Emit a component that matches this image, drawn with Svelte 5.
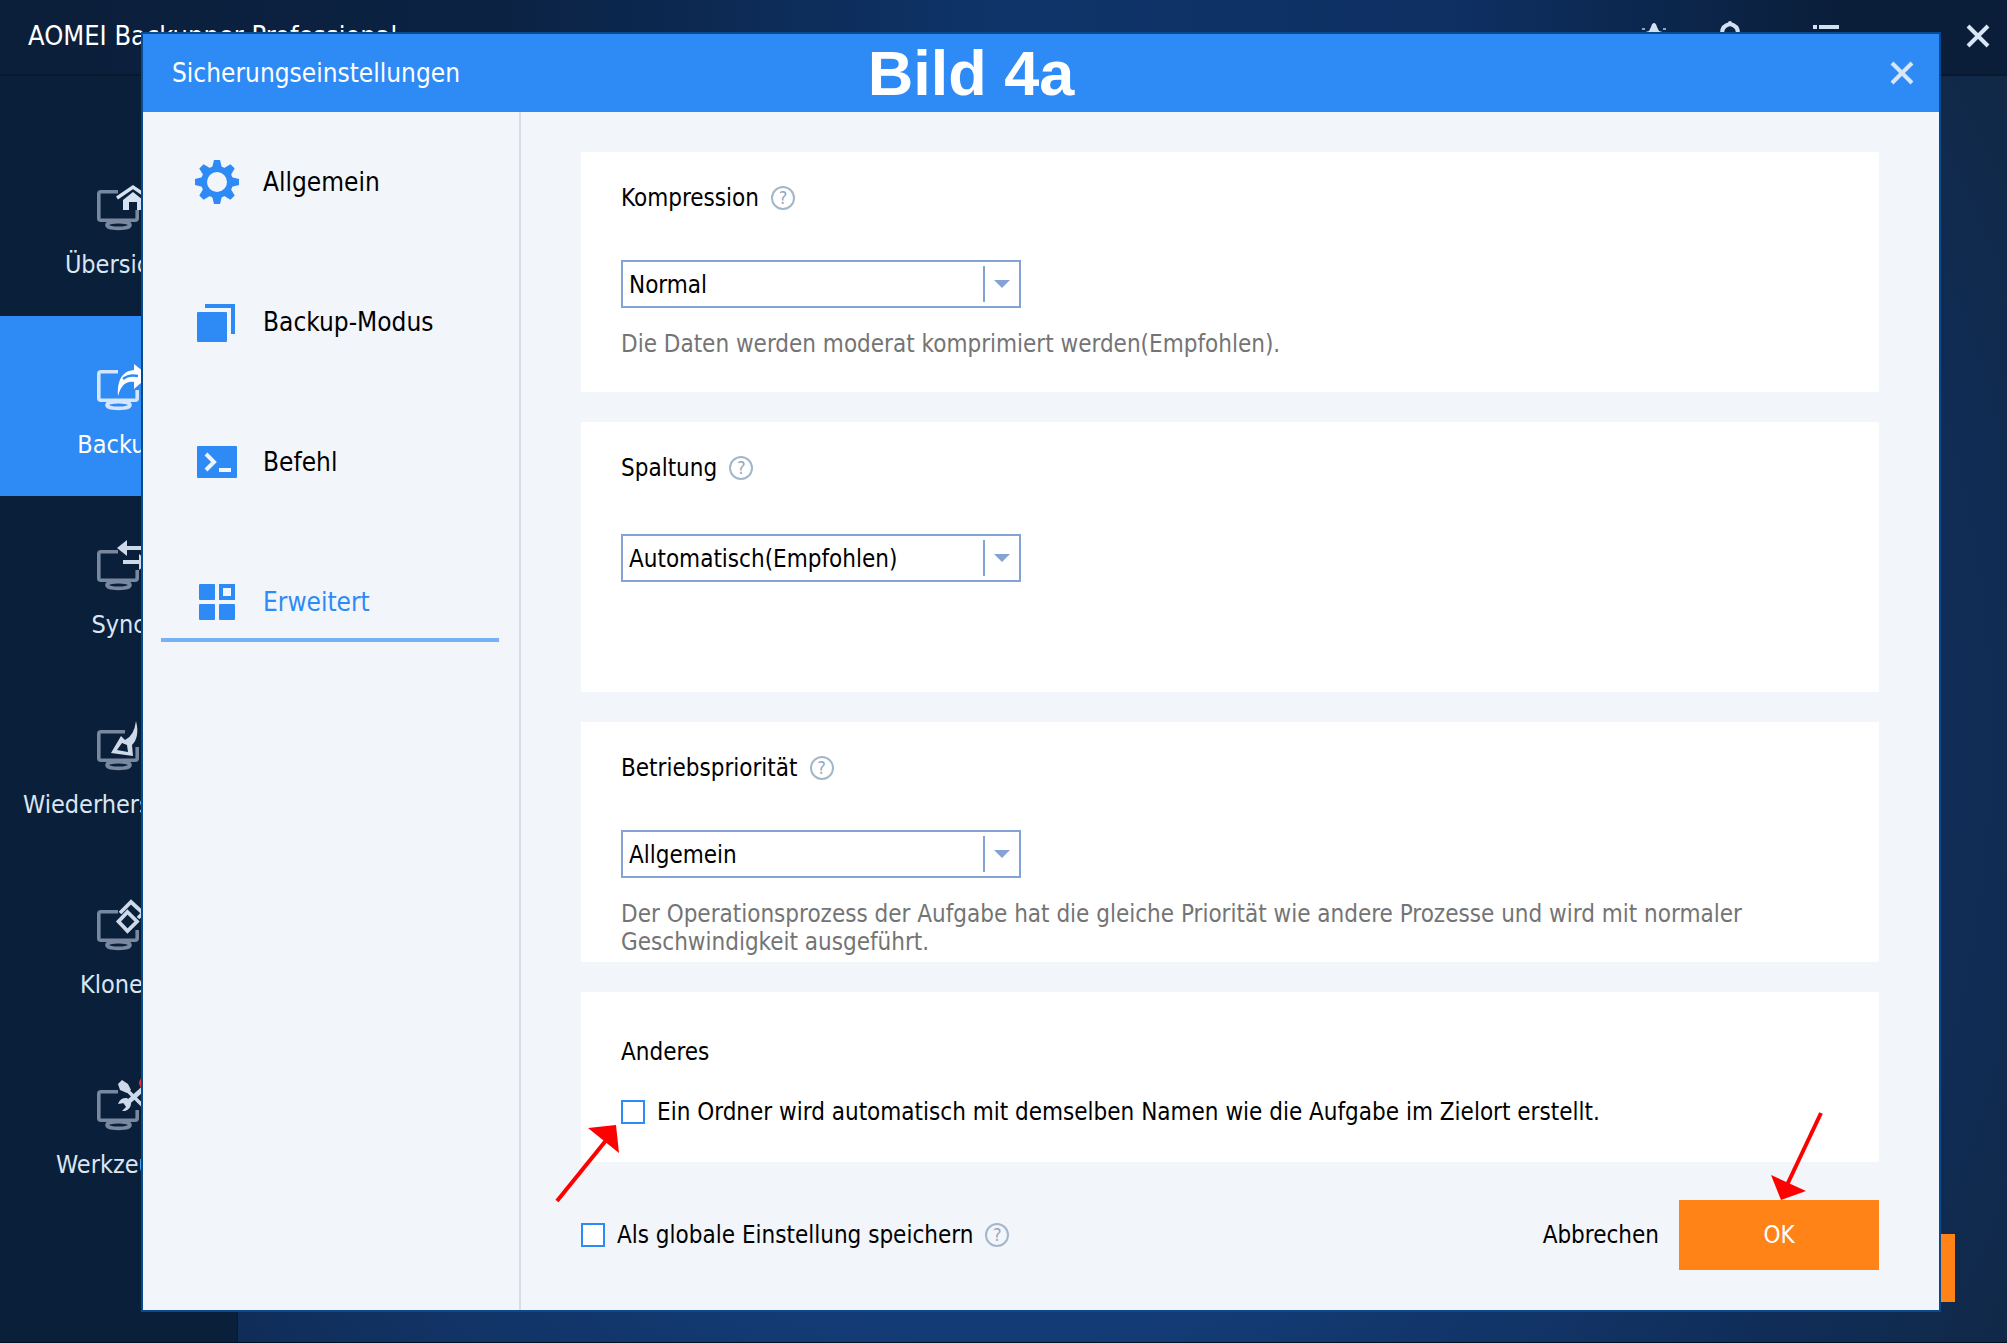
<script>
  const mainNav = [
    { label: 'Übersicht', icon: 'home' },
    { label: 'Backup', icon: 'backup', active: true },
    { label: 'Sync', icon: 'sync' },
    { label: 'Wiederherstellen', icon: 'restore' },
    { label: 'Klonen', icon: 'clone' },
    { label: 'Werkzeuge', icon: 'tools' },
  ];
  const tabs = [
    { label: 'Allgemein', icon: 'gear' },
    { label: 'Backup-Modus', icon: 'layers' },
    { label: 'Befehl', icon: 'terminal' },
    { label: 'Erweitert', icon: 'grid', active: true },
  ];
  let compression = $state('Normal');
  let splitting = $state('Automatisch(Empfohlen)');
  let priority = $state('Allgemein');
  let sameName = $state(false);
  let saveGlobal = $state(false);
</script>

{#snippet closeIcon()}
  <svg width="24" height="24" viewBox="0 0 24 24" aria-hidden="true">
    <path d="M2 2 22 22M22 2 2 22" stroke="#d9e6f5" stroke-width="4" fill="none" />
  </svg>
{/snippet}

{#snippet help(topic)}
  <button class="help" type="button" aria-label={'Hilfe: ' + topic}>?</button>
{/snippet}

<div class="app">
  <header class="titlebar">
    <h1>AOMEI Backupper Professional</h1>
    <div class="tools">
      <button type="button" aria-label="Upgrade">
        <svg width="28" height="28" viewBox="0 0 28 28" aria-hidden="true">
          <path d="M14 1Q16 1 17 5L19 9 26 11 20 17 21 25 14 21 7 25 8 17 2 11 9 9 11 5Q12 1 14 1Z" fill="#d3e0f0" />
          <path d="M2 7h3M23 7h3" stroke="#8fa3bf" stroke-width="2" />
        </svg>
      </button>
      <button type="button" aria-label="Benachrichtigungen">
        <svg width="28" height="28" viewBox="0 0 28 28" aria-hidden="true">
          <path d="M6 22V11C6 6 9 3 14 2c5 1 8 4 8 9v11M2 22h24" stroke="#d3e0f0" stroke-width="4" fill="none" />
          <circle cx="14" cy="1" r="2" fill="#d3e0f0" />
        </svg>
      </button>
      <button class="menu" type="button" aria-label="Menü">
        <svg width="28" height="28" viewBox="0 0 28 28" aria-hidden="true">
          <path d="M1 5h4M7 5h20M1 13h4M7 13h20M1 21h4M7 21h20" stroke="#d3e0f0" stroke-width="4" />
        </svg>
      </button>
      <button class="exit" type="button" aria-label="Schließen">{@render closeIcon()}</button>
    </div>
  </header>

  <div class="body">
    <nav class="main-nav" aria-label="Hauptmenü">
      {#each mainNav as item}
        <button type="button" class:active={item.active}>
          <svg width="60" height="50" viewBox="0 0 60 50" aria-hidden="true">
            <g class="monitor" fill="none" stroke-width="3.6">
              <path d={item.icon === 'restore' ? 'M36 9.8H12q-2.2 0-2.2 2v24.4q0 2 2.2 2h34q2.2 0 2.2-2V25' : 'M29 9.8H12q-2.2 0-2.2 2v24.4q0 2 2.2 2h34q2.2 0 2.2-2V28'} />
              <ellipse cx="29.5" cy="43" rx="11.5" ry="3.4" />
            </g>
            {#if item.icon === 'home'}
              <path d="M28 16 44 5 60 16" fill="none" stroke="#d6e1f1" stroke-width="3.4" />
              <path d="M34 18 44 10 54 18V28H48V20H40V28H34Z" fill="#d6e1f1" />
            {:else if item.icon === 'backup'}
              <path d="M29 34C28 17 34 9 45 8V2L60 14 45 27V20C36 19 32 24 29 34Z" fill="#fff" />
              <path d="M34 17Q40 12 49 14" stroke="#2e8bf5" stroke-width="2.4" fill="none" />
            {:else if item.icon === 'sync'}
              <path d="M28 6 38 -2V4H58V8H38V14ZM34 18H50V12L60 20 50 28V22H34Z" fill="#ced9e9" />
            {:else if item.icon === 'restore'}
              <path d="M47 -1Q51 15 43 23L44 34 22 31 32 14 36 18Q45 14 47 -1ZM33 21 28 28 39 30 38 23Z" fill="#ced9e9" fill-rule="evenodd" />
            {:else if item.icon === 'clone'}
              <path d="M38.5 10 48 19.5 38.5 29 29.5 19.5ZM31 11 42 0 54 11 49 16" fill="none" stroke="#ced9e9" stroke-width="3.8" />
            {:else}
              <path d="M35 5 56 26" stroke="#ced9e9" stroke-width="3.6" fill="none" />
              <path d="M29 2 33 -2 39 2 42 8 38 11 31 8Z" fill="#ced9e9" />
              <path d="M36 23 56 5" stroke="#ced9e9" stroke-width="5" />
              <path d="M38 16a8 8 0 0 0-9 6l6-1 2 4-4 4a8 8 0 0 0 9-9Z" fill="#ced9e9" />
              <circle cx="56" cy="1" r="6" fill="#f02c32" />
            {/if}
          </svg>
          <span>{item.label}</span>
        </button>
      {/each}
    </nav>
    <main class="stage">
      <button class="start" type="button" aria-label="Starten"></button>
    </main>
  </div>

  <div class="dialog" role="dialog" aria-labelledby="dialog-title">
    <header class="dialog-head">
      <h2 id="dialog-title">Sicherungseinstellungen</h2>
      <strong>Bild 4a</strong>
      <button type="button" aria-label="Dialog schließen">{@render closeIcon()}</button>
    </header>

    <div class="dialog-body">
      <nav class="tabs" aria-label="Einstellungen">
        {#each tabs as tab}
          <button type="button" class:active={tab.active}>
            <svg width="44" height="44" viewBox="0 0 44 44" fill="#2e8bf5" aria-hidden="true">
              {#if tab.icon === 'gear'}
                {#each [0, 45, 90, 135] as angle}
                  <path d="M19 0H25L27 8V36L25 44H19L17 36V8Z" transform="rotate({angle} 22 22)" />
                {/each}
                <circle cx="22" cy="22" r="16" />
                <circle cx="22" cy="22" r="10" fill="#f2f5fa" />
              {:else if tab.icon === 'layers'}
                <rect x="2" y="12" width="30" height="30" rx="1" />
                <path d="M10 4H40V34H36V8H10Z" />
              {:else if tab.icon === 'terminal'}
                <rect x="2" y="6" width="40" height="32" rx="1" />
                <path d="M11 14 19 22 11 30M24 30H36" fill="none" stroke="#f2f5fa" stroke-width="4" />
              {:else}
                <rect x="4" y="4" width="16" height="16" rx="1" />
                <path d="M24 4H40V20H24ZM28 8V16H36V8Z" fill-rule="evenodd" />
                <rect x="4" y="24" width="16" height="16" rx="1" />
                <rect x="24" y="24" width="16" height="16" rx="1" />
              {/if}
            </svg>
            <span>{tab.label}</span>
          </button>
        {/each}
      </nav>

      <form class="settings" onsubmit={(e) => e.preventDefault()}>
        <section class="card">
          <div class="caption"><label for="compression">Kompression</label>{@render help('Kompression')}</div>
          <div class="select">
            <select id="compression" bind:value={compression}>
              <option>Normal</option><option>Keine</option><option>Hoch</option>
            </select>
          </div>
          <p>Die Daten werden moderat komprimiert werden(Empfohlen).</p>
        </section>

        <section class="card split">
          <div class="caption"><label for="splitting">Spaltung</label>{@render help('Spaltung')}</div>
          <div class="select">
            <select id="splitting" bind:value={splitting}>
              <option>Automatisch(Empfohlen)</option><option>700 MB</option>
            </select>
          </div>
        </section>

        <section class="card">
          <div class="caption"><label for="priority">Betriebspriorität</label>{@render help('Betriebspriorität')}</div>
          <div class="select">
            <select id="priority" bind:value={priority}>
              <option>Allgemein</option><option>Niedrig</option><option>Hoch</option>
            </select>
          </div>
          <p>Der Operationsprozess der Aufgabe hat die gleiche Priorität wie andere Prozesse und wird mit normaler Geschwindigkeit ausgeführt.</p>
        </section>

        <section class="card other">
          <h3>Anderes</h3>
          <div class="check">
            <input id="same-name" type="checkbox" bind:checked={sameName} />
            <label for="same-name">Ein Ordner wird automatisch mit demselben Namen wie die Aufgabe im Zielort erstellt.</label>
            <svg class="arrow to-check" width="68" height="80" viewBox="0 0 68 80" aria-hidden="true">
              <path d="M3 77 54 14" stroke="#fe0000" stroke-width="4" />
              <path d="M34 4 62 1 65 29Z" fill="#fe0000" />
            </svg>
          </div>
        </section>

        <footer>
          <div class="check">
            <input id="save-global" type="checkbox" bind:checked={saveGlobal} />
            <label for="save-global">Als globale Einstellung speichern</label>
            {@render help('Globale Einstellung')}
          </div>
          <div class="actions">
            <button class="cancel" type="button">Abbrechen</button>
            <button class="ok" type="submit">OK
              <svg class="arrow to-ok" width="56" height="92" viewBox="0 0 56 92" aria-hidden="true">
                <path d="M52 4 18 76" stroke="#fe0000" stroke-width="4" />
                <path d="M2 66 37 82 12 91Z" fill="#fe0000" />
              </svg>
            </button>
          </div>
        </footer>
      </form>
    </div>
  </div>
</div>

<style>
  :global(body) {
    margin: 0;
  }

  .app,
  .app * {
    box-sizing: border-box;
  }

  .app {
    position: relative;
    display: flex;
    flex-direction: column;
    min-height: 100vh;
    overflow: hidden;
    border-bottom: 1px solid #04101f;
    font-family: 'DejaVu Sans Condensed', 'DejaVu Sans', sans-serif;
    font-size: 24px;
    line-height: 28px;
    color: #000;
    background: radial-gradient(ellipse 55% 90% at 50% 55%, #14407f 0%, #133b75 50%, #102d58 85%, #112742 110%);
  }

  button {
    padding: 0;
    border: 0;
    background: none;
    color: inherit;
    font: inherit;
    cursor: pointer;
  }

  svg {
    display: block;
    flex: none;
    overflow: visible;
  }

  h1,
  h2,
  h3,
  p {
    margin: 0;
    font-size: inherit;
    font-weight: 400;
  }

  .titlebar {
    display: flex;
    align-items: center;
    justify-content: space-between;
    height: 76px;
    padding: 0 17px 2px 28px;
    border-bottom: 2px solid #08182d;
    background: linear-gradient(90deg, #0b1f3a 0%, #0b2243 25%, #0e3469 50%, #0e3063 72%, #0a1e39 92%);
    color: #fff;
  }

  .titlebar h1 {
    font-size: 27px;
  }

  .tools {
    display: flex;
    align-items: center;
    gap: 48px;
  }

  .menu {
    margin-left: 20px;
  }

  .exit {
    margin-left: 78px;
  }

  .body {
    display: flex;
    flex: 1;
  }

  .main-nav {
    display: flex;
    flex-direction: column;
    width: 238px;
    padding-top: 60px;
    border-right: 1px solid #081a30;
    background: #0a1f3a;
  }

  .main-nav button {
    display: flex;
    flex-direction: column;
    align-items: center;
    gap: 19px;
    height: 180px;
    padding-top: 46px;
    color: #dbe6f3;
    font-size: 25px;
    white-space: nowrap;
  }

  .main-nav .active {
    background: #2e8bf5;
    color: #fff;
  }

  .monitor {
    stroke: #78889f;
  }

  .active .monitor {
    stroke: #d3e6fc;
  }

  .stage {
    display: flex;
    flex: 1;
    align-items: flex-end;
    justify-content: flex-end;
    padding: 0 52px 40px 0;
  }

  .start {
    width: 200px;
    height: 68px;
    background: #ff8316;
  }

  .dialog {
    position: absolute;
    inset: 32px 66px 30px 141px;
    display: flex;
    flex-direction: column;
    border: 2px solid #084a90;
    background: #f2f5fa;
  }

  .dialog-head {
    display: grid;
    grid-template-columns: 1fr auto 1fr;
    align-items: center;
    height: 78px;
    padding: 0 25px 0 29px;
    background: #2e8bf5;
    color: #fff;
  }

  .dialog-head h2 {
    font-size: 26px;
  }

  .dialog-head strong {
    padding-right: 144px;
    font-family: 'Liberation Sans', Arial, sans-serif;
    font-size: 63px;
    line-height: 76px;
  }

  .dialog-head button {
    justify-self: end;
  }

  .dialog-body {
    display: flex;
    flex: 1;
  }

  .tabs {
    display: flex;
    flex-direction: column;
    gap: 60px;
    width: 378px;
    padding: 30px 20px 0 18px;
    border-right: 2px solid #d9dce2;
  }

  .tabs button {
    display: flex;
    align-items: center;
    gap: 24px;
    height: 80px;
    padding-left: 34px;
    font-size: 26px;
  }

  .tabs .active {
    color: #2e8bf5;
    box-shadow: inset 0 -4px #76b1f8;
  }

  .settings {
    display: flex;
    flex: 1;
    flex-direction: column;
    gap: 30px;
    padding: 40px 60px;
  }

  .card {
    min-height: 240px;
    padding: 32px 100px 0 40px;
    background: #fff;
  }

  .caption {
    display: flex;
    align-items: center;
    gap: 12px;
    height: 28px;
    margin-bottom: 48px;
  }

  .help {
    width: 24px;
    height: 24px;
    border: 2px solid #a4b6c9;
    border-radius: 50%;
    color: #94a9c0;
    font-size: 18px;
    line-height: 20px;
  }

  .select {
    position: relative;
    width: 400px;
    height: 48px;
  }

  .select::before {
    content: '';
    position: absolute;
    top: 6px;
    right: 36px;
    width: 2px;
    height: 36px;
    background: #83a3d5;
  }

  .select::after {
    content: '';
    position: absolute;
    top: 20px;
    right: 11px;
    border: 8px solid transparent;
    border-top-color: #83a3d5;
    border-bottom: 0;
  }

  select {
    width: 100%;
    height: 100%;
    padding: 2px 40px 0 6px;
    border: 2px solid #83a3d5;
    border-radius: 0;
    background: #fff;
    color: #000;
    font: inherit;
    appearance: none;
  }

  .card p {
    margin-top: 22px;
    color: #747474;
  }

  .split {
    min-height: 270px;
  }

  .split .caption {
    margin-bottom: 52px;
  }

  .other {
    min-height: 170px;
    padding-top: 46px;
  }

  .other h3 {
    margin-bottom: 32px;
  }

  .check {
    position: relative;
    display: flex;
    align-items: center;
    gap: 12px;
  }

  .check input {
    flex: none;
    width: 24px;
    height: 24px;
    margin: 0;
    border: 2px solid #2e8bf5;
    background: #fff;
    appearance: none;
  }

  .check input:checked {
    background: #2e8bf5;
  }

  .arrow {
    position: absolute;
    pointer-events: none;
  }

  .to-check {
    top: 26px;
    left: -67px;
  }

  footer {
    display: flex;
    align-items: center;
    justify-content: space-between;
    margin-top: 8px;
  }

  .actions {
    display: flex;
    align-items: center;
    gap: 20px;
  }

  .ok {
    position: relative;
    width: 200px;
    height: 70px;
    background: #ff8316;
    color: #fff;
  }

  .to-ok {
    bottom: 69px;
    left: 90px;
  }
</style>
